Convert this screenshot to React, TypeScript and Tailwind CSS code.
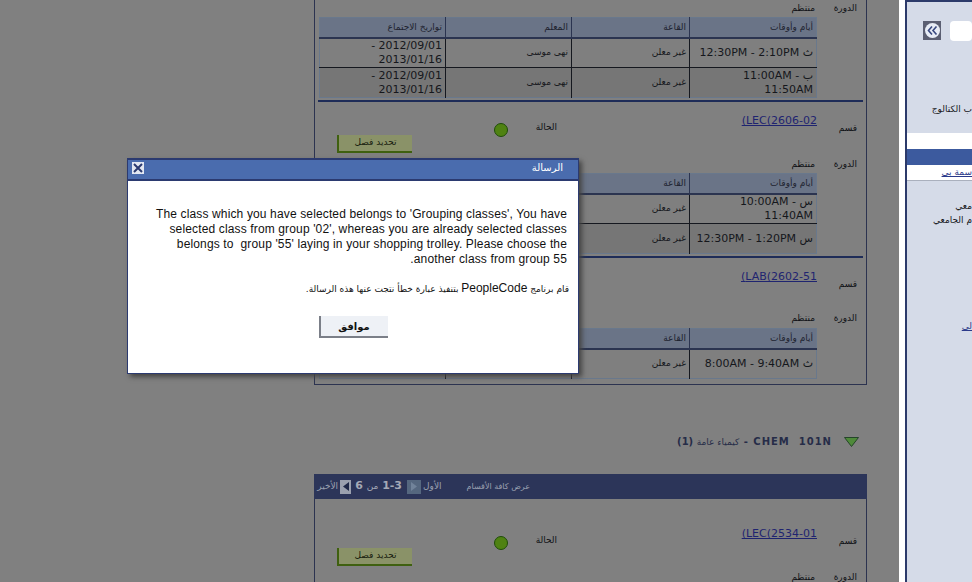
import React from 'react';

const ar = "font-['DejaVu_Sans',sans-serif]";

type Row = { time: string; teacher?: string; dates?: string };

const DurationRow = ({ height }: { height: string }) => (
  <div className={`flex ${height} items-center text-[9px] text-[#101216]`}>
    <span className="w-[49px] pr-[9px]">الدورة</span>
    <span className="pr-[2px]">منتظم</span>
  </div>
);

// covered: the last two columns sit behind the dialog, so they stay empty
const MeetingTable = ({ rows, covered }: { rows: Row[]; covered?: boolean }) => (
  <table className="mr-[49px] w-[498px] table-fixed border border-[#69788c] text-[#15171c]">
    <thead>
      <tr className="h-[20px] bg-[#6a7487] text-right text-[9px] text-[#1e2330]">
        <th className="w-[127px] border-b-2 border-l border-[#2b3450] pr-[3px] font-normal">أيام وأوقات</th>
        <th className="w-[118px] border-b-2 border-l border-[#2b3450] pr-[3px] font-normal">القاعة</th>
        <th className="w-[126px] border-b-2 border-l border-[#2b3450] pr-[3px] font-normal">{!covered && 'المعلم'}</th>
        <th className="border-b-2 border-[#2b3450] pr-[3px] font-normal">{!covered && 'تواريخ الاجتماع'}</th>
      </tr>
    </thead>
    <tbody>
      {rows.map((row, i) => (
        <tr key={i} className={i % 2 ? 'bg-[#767676]' : 'bg-[#7f7f7f]'}>
          <td className={`h-[30px] border-l border-[#15181f] pr-[3px] pl-[4px] text-[11px] leading-[14px] ${i ? 'border-t' : ''}`}>{row.time}</td>
          <td className={`border-l border-[#15181f] pr-[3px] text-[9px] ${i ? 'border-t' : ''}`}>غير معلن</td>
          <td className={`border-l border-[#15181f] pr-[3px] text-[9px] ${i ? 'border-t' : ''}`}>{row.teacher}</td>
          <td className={`border-[#15181f] pr-[3px] text-[11px] leading-[14px] ${i ? 'border-t' : ''}`}>{row.dates}</td>
        </tr>
      ))}
    </tbody>
  </table>
);

const SectionRow = ({ code, status }: { code: string; status?: boolean }) => (
  <div className="flex h-[40px] text-[9px] text-[#101216]">
    <span className="w-[49px] pt-[8px] pr-[9px]">قسم</span>
    <a className="h-[14px] w-[260px] text-[11px] leading-[14px] text-[#1f2470] underline">
      <bdi>{code}</bdi>)
    </a>
    {status && (
      <>
        <span className="w-[47px] pt-[7px]">الحالة</span>
        <span className="mt-[9px] mr-[2px] h-[14px] w-[14px] rounded-full border border-[#1f4d08] bg-[#4f8212]" />
        <button className="mt-[21px] mr-[82px] h-[18px] w-[75px] border-b-2 border-l-2 border-[#3f6010] bg-[#8a9268] text-[9px] text-[#181d0e]">
          تحديد فصل
        </button>
      </>
    )}
  </div>
);

const SmallArrow = ({ dim }: { dim?: boolean }) => (
  <span className={`flex h-[14px] items-center justify-center ${dim ? 'w-[14px] bg-[#55677f]' : 'w-[11px] bg-[#9aa0ae]'}`}>
    <svg width="6" height="9" viewBox="0 0 6 9">
      <path d={dim ? 'M0 0 L6 4.5 L0 9Z' : 'M6 0 L0 4.5 L6 9Z'} fill={dim ? '#71839a' : '#1f2848'} />
    </svg>
  </span>
);

const App = () => (
  <div dir="rtl" className={`flex h-[582px] w-[972px] overflow-hidden bg-white ${ar}`}>
    {/* right side panel, clipped by the window */}
    <aside className="h-full w-[67px] shrink-0 overflow-hidden border-t-2 border-l-2 border-[#2c3a6a] bg-[#d5dbe8]">
      <div className="flex h-[131px] flex-col">
        <div className="mt-[19px] flex items-start">
          <span className="h-[20px] w-[22px] rounded-sm bg-white" />
          <span className="mr-[9px] flex h-[19px] w-[18px] items-center justify-center bg-[#5b5f72]">
            <span className="flex h-[15px] w-[15px] items-center justify-center rounded-full bg-[#e8edf6]">
              <svg width="11" height="9" viewBox="0 0 11 9" fill="none" stroke="#3a4a80" strokeWidth="1.6">
                <path d="M5 0.5 L1.5 4.5 L5 8.5 M9.5 0.5 L6 4.5 L9.5 8.5" />
              </svg>
            </span>
          </span>
        </div>
        <span className="mt-[62px] text-[9px] text-[#15171c]">ب الكتالوج</span>
      </div>
      <div className="h-[16px] bg-white" />
      <div className="h-[16px] bg-[#3c5a9e]" />
      <div className="h-[16px] border-b border-[#aab0bd] bg-white text-[9px] leading-[14px] text-[#2b3a8a] underline">سمة بي</div>
      <div className="mt-[18px] text-[9px] leading-[14px] text-[#15171c]">
        <div>معي</div>
        <div>م الجامعي</div>
      </div>
      <div className="mt-[93px] text-[9px] text-[#2b3a8a] underline">لي</div>
    </aside>

    {/* white gutter */}
    <div className="w-[6px] shrink-0 bg-white" />

    {/* page content behind the modal overlay */}
    <main className="w-[899px] shrink-0 bg-[#808080] pr-[32px]">
      <div className="h-[385px] w-[553px] border-x border-b border-[#2c3350]">
        <DurationRow height="h-[17px]" />
        <MeetingTable
          rows={[
            { time: 'ث 12:30PM - 2:10PM', teacher: 'نهى موسى', dates: '2012/09/01 - 2013/01/16' },
            { time: 'ب 11:00AM - 11:50AM', teacher: 'نهى موسى', dates: '2012/09/01 - 2013/01/16' },
          ]}
        />
        <div className="mx-[3px] mt-[2px] mb-[12px] h-[2px] bg-[#1e2c58]" />
        <SectionRow code="LEC(2606-02" status />
        <DurationRow height="mt-[2px] h-[17px]" />
        <MeetingTable covered rows={[{ time: 'س 10:00AM - 11:40AM' }, { time: 'س 12:30PM - 1:20PM' }]} />
        <div className="mx-[3px] mt-[2px] mb-[12px] h-[2px] bg-[#1e2c58]" />
        <SectionRow code="LAB(2602-51" />
        <DurationRow height="h-[18px]" />
        <MeetingTable covered rows={[{ time: 'ث 8:00AM - 9:40AM' }]} />
      </div>

      <div className="mt-[49px] flex h-[16px] w-[553px] items-center pr-[8px] text-[#262c48]">
        <svg width="15" height="10" viewBox="0 0 15 10">
          <path d="M0.5 0.5 H14.5 L7.5 9.5Z" fill="#4f8a3a" stroke="#24452a" />
        </svg>
        <span className="mr-[12px] whitespace-pre text-[10px] font-bold tracking-[1px]">
          CHEM  101N - <span className="text-[9px] font-normal tracking-normal">كيمياء عامة</span> (1)
        </span>
      </div>

      <div className="mt-[24px] flex h-[25px] w-[553px] items-center whitespace-nowrap bg-[#2c3559] pr-[337px] text-[9px] text-[#9aa0b0]">
        <span className="text-[8px]">عرض كافة الأقسام</span>
        <span className="mr-[25px] flex items-center">
          <span>الأول</span>
          <span className="mr-[2px]"><SmallArrow dim /></span>
          <span className="mr-[5px] text-[11px] font-bold text-[#a4a9b6]">
            1-3 <span className="text-[9px] font-normal">من</span> 6
          </span>
          <span className="mr-[4px]"><SmallArrow /></span>
          <span className="mr-[2px]">الأخير</span>
        </span>
      </div>

      <div className="h-[90px] w-[553px] border-x border-[#2c3350] pt-[28px]">
        <SectionRow code="LEC(2534-01" status />
        <DurationRow height="mt-[2px] h-[17px]" />
      </div>
    </main>

    {/* message dialog */}
    <div className="absolute top-[158px] left-[127px] h-[216px] w-[452px] border border-t-2 border-[#2b3a70] bg-white shadow-[3px_3px_5px_#444444]">
      <div className="flex h-[21px] justify-between border-b-2 border-[#2b3a70] bg-[#4a6cae] pr-[15px] pl-[4px] text-[10px] text-white">
        <span>الرسالة</span>
        <span className="mt-[2px] flex h-[12px] w-[12px] items-center justify-center bg-[#e3e8f2]">
          <svg width="10" height="10" viewBox="0 0 10 10" stroke="#2b3a70" strokeWidth="2">
            <path d="M1 1 L9 9 M9 1 L1 9" />
          </svg>
        </span>
      </div>
      <div className="pt-[26px] pr-[11px] pl-[19px]">
        <p className="font-['Liberation_Sans',sans-serif] text-[12px] leading-[15px] tracking-[0.14px] whitespace-pre-wrap text-[#111]">
          The class which you have selected belongs to 'Grouping classes', You have selected class from group '02', whereas you are already selected classes belongs to  group '55' laying in your shopping trolley. Please choose the another class from group 55.
        </p>
        <p className="mt-[14px] -mr-[2px] text-[9px] leading-[15px] text-[#111]">
          قام برنامج <span className="font-['Liberation_Sans',sans-serif] text-[12px]">PeopleCode</span> بتنفيذ عبارة خطأ نتجت عنها هذه الرسالة.
        </p>
        <div className="mt-[19px] flex justify-center pr-[9px] pl-[1px]">
          <button className="h-[22px] w-[69px] border-b-2 border-l-2 border-[#7b7f88] bg-[#eef1f6] text-[10px] font-bold text-[#111]">
            موافق
          </button>
        </div>
      </div>
    </div>
  </div>
);

export default App;
